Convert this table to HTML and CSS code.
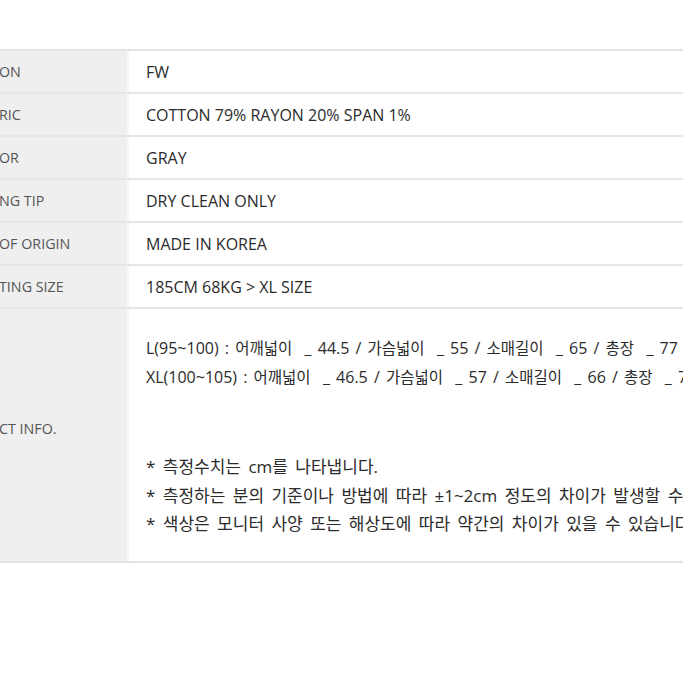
FILE: index.html
```html
<!DOCTYPE html>
<html lang="ko">
<head>
<meta charset="utf-8">
<title>Product Info</title>
<link rel="stylesheet" href="styles.css">
</head>
<body>
<div class="info">
  <div class="row"><div class="label">ON</div><div class="value">FW</div></div>
  <div class="row"><div class="label">RIC</div><div class="value">COTTON 79% RAYON 20% SPAN 1%</div></div>
  <div class="row"><div class="label">OR</div><div class="value">GRAY</div></div>
  <div class="row"><div class="label">NG TIP</div><div class="value">DRY CLEAN ONLY</div></div>
  <div class="row"><div class="label">OF ORIGIN</div><div class="value">MADE IN KOREA</div></div>
  <div class="row"><div class="label">TING SIZE</div><div class="value">185CM 68KG &gt; XL SIZE</div></div>
  <div class="row row-big">
    <div class="label label-big">CT INFO.</div>
    <div class="value value-big">
      <p class="sizes">L(95~100) : <span class="ko">어깨넓이</span>&nbsp; _ 44.5 / <span class="ko">가슴넓이</span>&nbsp; _ 55 / <span class="ko">소매길이</span>&nbsp; _ 65 / <span class="ko">총장</span>&nbsp; _ 77<br>XL(100~105) : <span class="ko">어깨넓이</span>&nbsp; _ 46.5 / <span class="ko">가슴넓이</span>&nbsp; _ 57 / <span class="ko">소매길이</span>&nbsp; _ 66 / <span class="ko">총장</span>&nbsp; _ 79</p>
      <p class="notes">* 측정수치는 cm를 나타냅니다.<br>* 측정하는 분의 기준이나 방법에 따라 ±1~2cm 정도의 차이가 발생할 수 있습니다.<br>* 색상은 모니터 사양 또는 해상도에 따라 약간의 차이가 있을 수 있습니다.</p>
    </div>
  </div>
</div>
</body>
</html>
```

FILE: styles.css
```css
html, body {
  margin: 0;
  padding: 0;
  background: #ffffff;
  overflow: hidden;
}
body {
  padding-top: 49px;
  font-family: "Open Sans", "Noto Sans CJK KR", sans-serif;
  font-size: 16px;
  color: #2b2b2b;
}
.info {
  border-top: 2px solid #e4e4e4;
  border-bottom: 2px solid #e4e4e4;
  width: 683px;
}
.row {
  display: grid;
  grid-template-columns: 129px 1fr;
  height: 41px;
  border-top: 2px solid #e6e6e6;
}
.row:first-child {
  border-top: 0;
}
.label {
  background: #efefef;
  border-right: 2px solid #f7f7f7;
  color: #555555;
  font-size: 14.3px;
  text-indent: -1px;
  display: flex;
  align-items: center;
  white-space: nowrap;
  overflow: hidden;
}
.value {
  display: flex;
  align-items: center;
  padding-left: 17px;
  white-space: nowrap;
  overflow: hidden;
}
.row-big {
  height: 252px;
}
.label-big {
  align-items: flex-start;
  padding-top: 110px;
}
.value-big {
  display: block;
  padding-top: 24px;
}
.value-big p {
  margin: 0;
}
.sizes {
  line-height: 28px;
  word-spacing: 2px;
}
.ko {
  font-family: "Noto Sans CJK KR", sans-serif;
  font-size: 15.5px;
}
.notes {
  margin-top: 62px !important;
  font-size: 17px;
  line-height: 28.5px;
  word-spacing: 3px;
}
```
